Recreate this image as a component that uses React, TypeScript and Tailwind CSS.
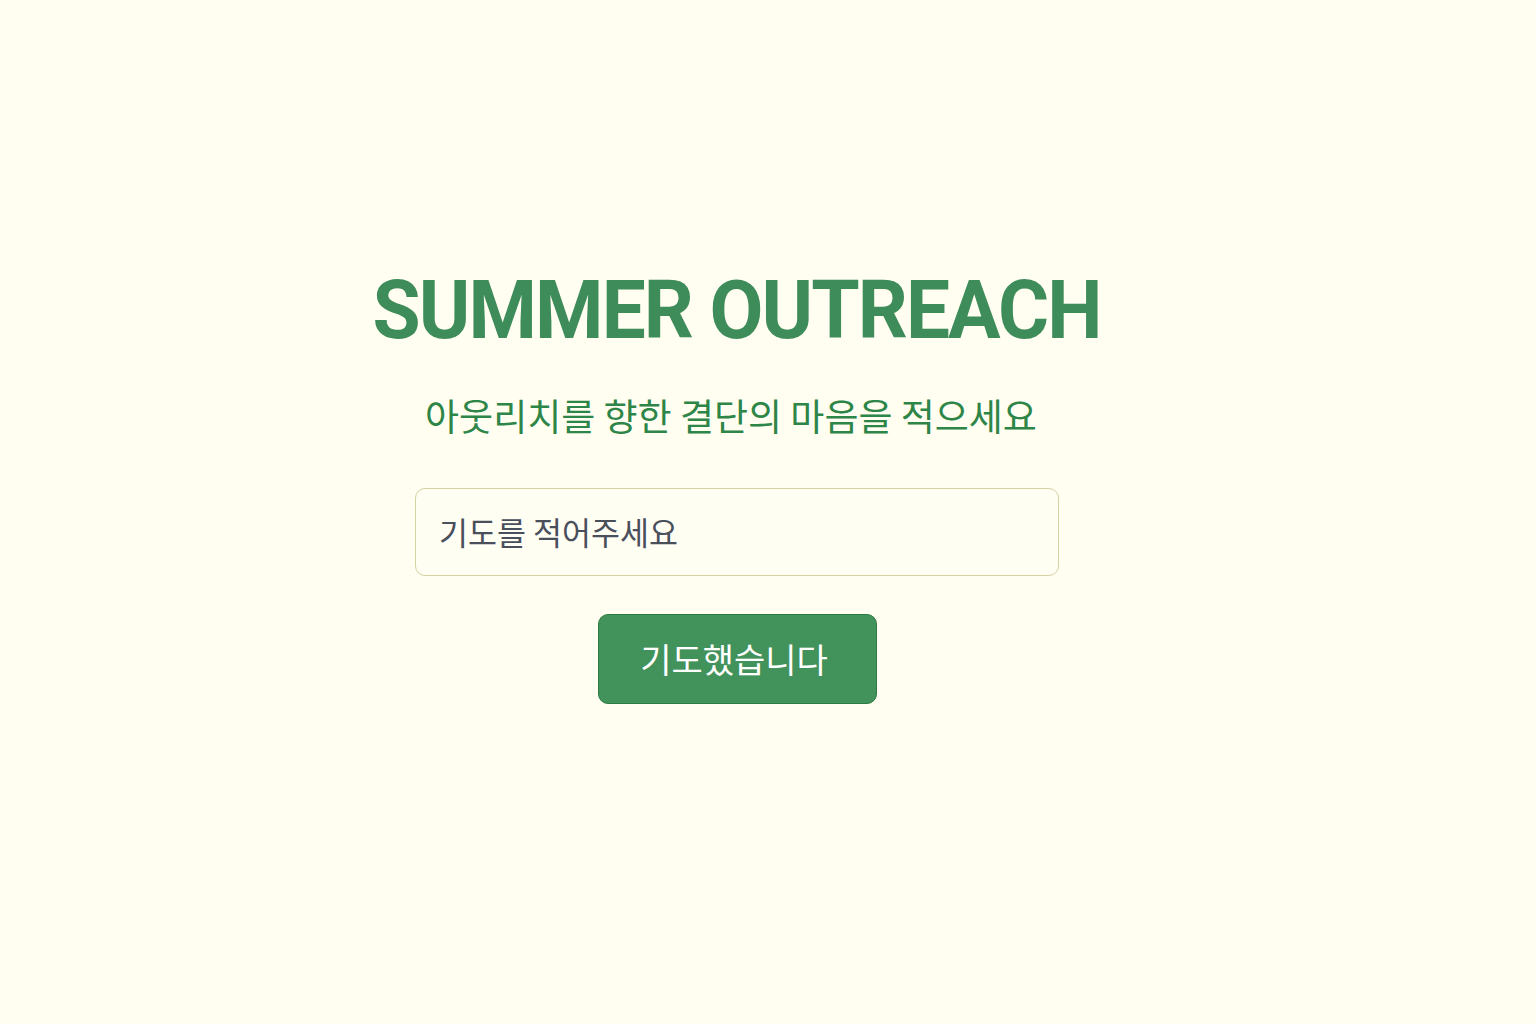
export default function App() {
  return (
    <div className="min-h-[1024px] w-full bg-[#fffef1] pr-[62px]">
      <div className="flex flex-col items-center pt-[261px]">
        <h1 className="scale-x-[0.954] py-[8px] text-[82px] font-bold leading-none tracking-[-2px] text-[#3e8c5a] [font-family:Roboto,'Liberation_Sans',sans-serif]">
          SUMMER OUTREACH
        </h1>
        <p className="mt-[38px] pr-[12px] text-[37px] leading-none text-[#2e8548] [font-family:'Noto_Sans_CJK_KR',sans-serif]">
          아웃리치를 향한 결단의 마음을 적으세요
        </p>
        <div className="mt-[54px] flex h-[88px] w-[644px] items-center rounded-[10px] border border-[#d6d3a2] bg-[#fffef3] px-[23px]">
          <span className="text-[31.5px] leading-none text-[#4a4f5c] [font-family:'Noto_Sans_CJK_KR',sans-serif]">
            기도를 적어주세요
          </span>
        </div>
        <button className="mt-[38px] flex h-[90px] w-[279px] items-center justify-center rounded-[10px] border border-[#2d7a45] bg-[#42925c] pr-[6px] text-[34px] leading-none text-white [font-family:'Noto_Sans_CJK_KR',sans-serif]">
          기도했습니다
        </button>
      </div>
    </div>
  );
}
